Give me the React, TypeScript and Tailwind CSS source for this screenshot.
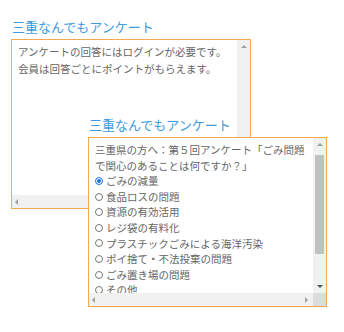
import React from "react";

const font = { fontFamily: '"Noto Sans CJK JP", "Noto Sans", sans-serif' };

function Up() {
  return <div className="w-0 h-0 border-l-[3px] border-r-[3px] border-b-[3px] border-l-transparent border-r-transparent border-b-[#a0a0a0]" />;
}
function Down() {
  return <div className="w-0 h-0 border-l-[3px] border-r-[3px] border-t-[3px] border-l-transparent border-r-transparent border-t-[#505050]" />;
}
function Left() {
  return <div className="w-0 h-0 border-t-[3px] border-b-[3px] border-r-[3px] border-t-transparent border-b-transparent border-r-[#a0a0a0]" />;
}
function Right() {
  return <div className="w-0 h-0 border-t-[3px] border-b-[3px] border-l-[3px] border-t-transparent border-b-transparent border-l-[#a0a0a0]" />;
}

function Radio({ checked }: { checked?: boolean }) {
  return checked ? (
    <span className="w-[8px] h-[8px] rounded-full border border-[#1a73e8] flex items-center justify-center mr-[3px] shrink-0">
      <span className="w-[4px] h-[4px] rounded-full bg-[#1a73e8]" />
    </span>
  ) : (
    <span className="w-[8px] h-[8px] rounded-full border border-[#767676] mr-[3px] shrink-0" />
  );
}

const options = [
  "ごみの減量",
  "食品ロスの問題",
  "資源の有効活用",
  "レジ袋の有料化",
  "プラスチックごみによる海洋汚染",
  "ポイ捨て・不法投棄の問題",
  "ごみ置き場の問題",
  "その他",
];

export default function App() {
  return (
    <div className="relative w-[344px] h-[332px] bg-white overflow-hidden" style={font}>
      {/* Widget 1 */}
      <div className="pl-[11px] pt-[18px]">
        <div className="pl-[1px] text-[13px] leading-[17px] text-[#3d9ce0]">三重なんでもアンケート</div>
        <div className="mt-[4px] w-[240px] h-[170px] border border-[#f3a94f] flex flex-col bg-white">
          <div className="flex flex-1 min-h-0">
            <div className="flex-1 pl-[6px] pt-[4px] text-[10.5px] leading-[16.5px] text-[#666] whitespace-nowrap overflow-hidden">
              <div>アンケートの回答にはログインが必要です。</div>
              <div>会員は回答ごとにポイントがもらえます。</div>
            </div>
            <div className="w-[13px] bg-[#f1f1f1] flex flex-col items-center pt-[5px]">
              <Up />
            </div>
          </div>
          <div className="h-[13px] bg-[#f1f1f1] flex items-center pl-[3px]">
            <Left />
          </div>
        </div>
      </div>

      {/* Widget 2 */}
      <div className="absolute left-[88px] top-[116px]">
        <div className="pl-[1px] text-[13px] leading-[17px] text-[#3d9ce0]">三重なんでもアンケート</div>
        <div className="mt-[4px] w-[239px] h-[170px] border border-[#f3a94f] flex flex-col bg-white">
          <div className="flex flex-1 min-h-0">
            <div className="flex-1 pl-[6px] pt-[4px] text-[10.5px] leading-[15.6px] text-[#666] whitespace-nowrap overflow-hidden">
              <div>三重県の方へ：第５回アンケート「ごみ問題</div>
              <div>で関心のあることは何ですか？」</div>
              {options.map((o, i) => (
                <div key={o} className="flex items-center">
                  <Radio checked={i === 0} />
                  <span>{o}</span>
                </div>
              ))}
            </div>
            <div className="w-[13px] bg-[#f1f1f1] flex flex-col items-center">
              <div className="h-[13px] flex items-center justify-center">
                <Up />
              </div>
              <div className="mt-[4px] w-[9px] h-[99px] bg-[#c1c1c1]" />
              <div className="flex-1" />
              <div className="h-[13px] flex items-center justify-center">
                <Down />
              </div>
            </div>
          </div>
          <div className="h-[13px] flex">
            <div className="flex-1 bg-[#f1f1f1] flex items-center justify-between pl-[3px] pr-[5px]">
              <Left />
              <Right />
            </div>
            <div className="w-[13px] bg-[#dcdcdc]" />
          </div>
        </div>
      </div>
    </div>
  );
}
